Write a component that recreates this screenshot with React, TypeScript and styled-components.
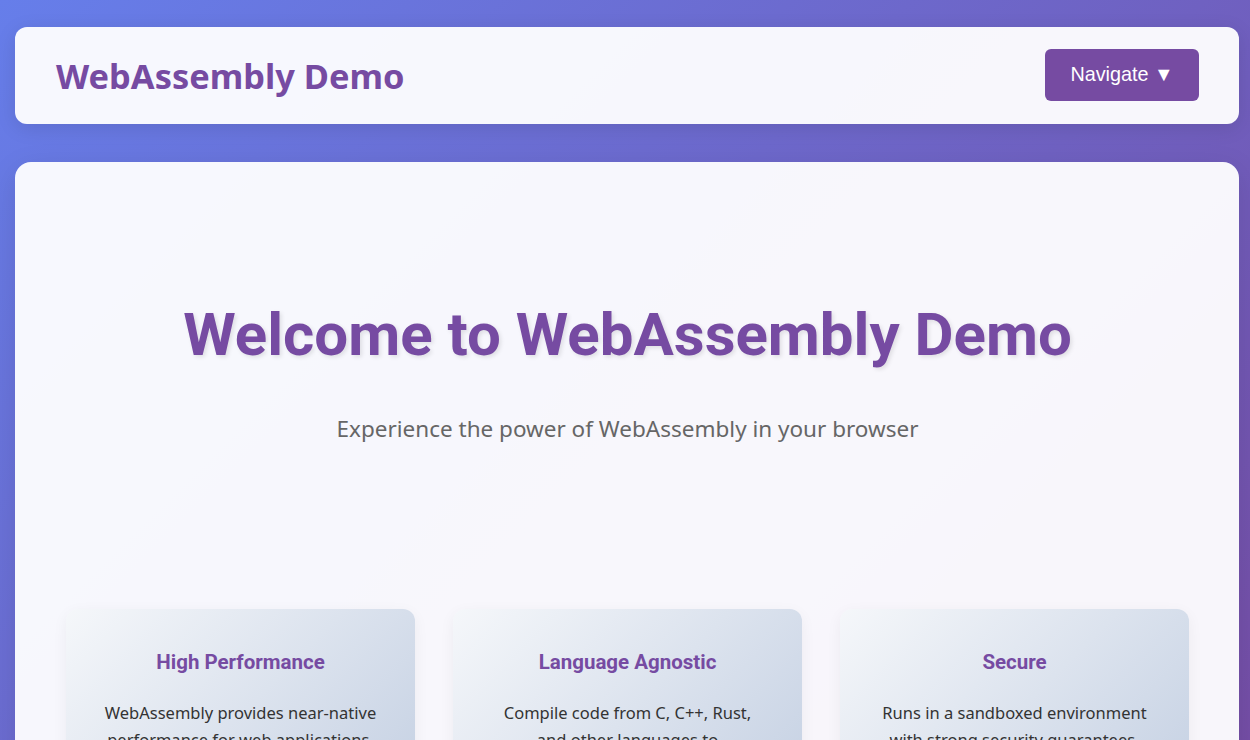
import styled, { createGlobalStyle } from 'styled-components';

const GlobalStyle = createGlobalStyle`
  * { box-sizing: border-box; }
  html, body {
    margin: 0;
    padding: 0;
  }
  body {
    min-height: 100vh;
    background: linear-gradient(135deg, #667eea 0%, #764ba2 100%);
    font-family: 'Noto Sans', 'Open Sans', sans-serif;
    color: #333;
    overflow: hidden;
  }
`;

const Page = styled.div`
  padding: 27px 11px 0 15px;
  display: flex;
  flex-direction: column;
  gap: 38px;
`;

const Header = styled.header`
  height: 97px;
  display: flex;
  align-items: center;
  justify-content: space-between;
  padding: 0 40px;
  background: rgba(255, 255, 255, 0.95);
  border-radius: 12px;
  box-shadow: 0 4px 20px rgba(0, 0, 0, 0.1);
`;

const Brand = styled.h1`
  margin: 0 0 0 1px;
  font-family: 'Noto Sans', sans-serif;
  font-size: 34.4px;
  font-weight: 700;
  color: #764ba2;
`;

const NavButton = styled.button`
  width: 154px;
  height: 52px;
  margin-top: -2px;
  border: none;
  border-radius: 6px;
  background: #764ba2;
  color: #fff;
  font-family: 'Liberation Sans', Arial, sans-serif;
  font-size: 19.8px;
  cursor: pointer;
`;

const Main = styled.main`
  background: rgba(255, 255, 255, 0.95);
  border-radius: 16px;
  box-shadow: 0 8px 30px rgba(0, 0, 0, 0.1);
  padding: 0 50px 48px 51px;
  min-height: 640px;
`;

const Hero = styled.section`
  text-align: center;
  padding: 140px 0 0;
  height: 447px;
`;

const HeroTitle = styled.h2`
  margin: 0;
  font-family: Roboto, sans-serif;
  font-size: 60px;
  font-weight: 700;
  line-height: 66px;
  color: #764ba2;
  text-shadow: 2px 2px 4px rgba(0, 0, 0, 0.1);
`;

const HeroSubtitle = styled.p`
  margin: 45px 0 0;
  font-size: 22.5px;
  line-height: 31px;
  color: #666;
`;

const Features = styled.div`
  display: grid;
  grid-template-columns: repeat(3, 1fr);
  gap: 38px;
`;

const FeatureCard = styled.div`
  background: linear-gradient(135deg, #f5f7fa 0%, #c3cfe2 100%);
  border-radius: 12px;
  padding: 41px 36px 40px;
  text-align: center;
  box-shadow: 0 4px 15px rgba(0, 0, 0, 0.05);
`;

const FeatureTitle = styled.h3`
  margin: 0 0 26px;
  font-family: Roboto, sans-serif;
  font-size: 20.5px;
  font-weight: 700;
  color: #764ba2;
`;

const FeatureText = styled.p`
  margin: 0;
  font-size: 16.5px;
  line-height: 26.5px;
  color: #333;
`;

const features = [
  {
    title: 'High Performance',
    text: 'WebAssembly provides near-native performance for web applications.',
  },
  {
    title: 'Language Agnostic',
    text: 'Compile code from C, C++, Rust, and other languages to WebAssembly.',
  },
  {
    title: 'Secure',
    text: 'Runs in a sandboxed environment with strong security guarantees.',
  },
];

export default function App() {
  return (
    <>
      <GlobalStyle />
      <Page>
        <Header>
          <Brand>WebAssembly Demo</Brand>
          <NavButton>Navigate ▼</NavButton>
        </Header>
        <Main>
          <Hero>
            <HeroTitle>Welcome to WebAssembly Demo</HeroTitle>
            <HeroSubtitle>Experience the power of WebAssembly in your browser</HeroSubtitle>
          </Hero>
          <Features>
            {features.map((f) => (
              <FeatureCard key={f.title}>
                <FeatureTitle>{f.title}</FeatureTitle>
                <FeatureText>{f.text}</FeatureText>
              </FeatureCard>
            ))}
          </Features>
        </Main>
      </Page>
    </>
  );
}
